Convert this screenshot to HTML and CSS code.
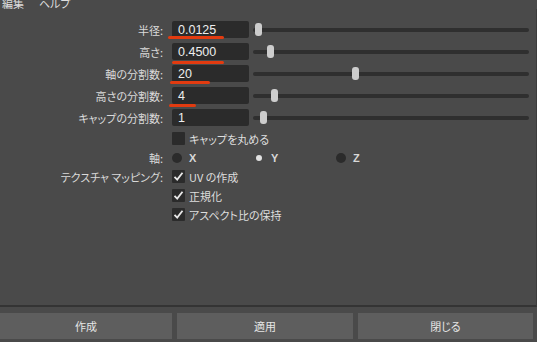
FILE: index.html
```html
<!DOCTYPE html>
<html lang="ja">
<head>
<meta charset="utf-8">
<link rel="stylesheet" href="styles.css">
</head>
<body>
<div class="menubar"><span class="menu">編集</span><span class="menu">ヘルプ</span></div>
<div class="panel">
  <div class="fields">
    <div class="frow">
      <span class="label">半径:</span>
      <div class="field">0.0125<span class="mark m1"></span></div>
      <div class="slider"><div class="track"></div><div class="thumb" style="left:2px"></div></div>
    </div>
    <div class="frow">
      <span class="label">高さ:</span>
      <div class="field">0.4500<span class="mark m2"></span></div>
      <div class="slider"><div class="track"></div><div class="thumb" style="left:14px"></div></div>
    </div>
    <div class="frow">
      <span class="label">軸の分割数:</span>
      <div class="field">20<span class="mark m3"></span></div>
      <div class="slider"><div class="track"></div><div class="thumb" style="left:99px"></div></div>
    </div>
    <div class="frow">
      <span class="label">高さの分割数:</span>
      <div class="field">4<span class="mark m4"></span></div>
      <div class="slider"><div class="track"></div><div class="thumb" style="left:18px"></div></div>
    </div>
    <div class="frow">
      <span class="label">キャップの分割数:</span>
      <div class="field">1</div>
      <div class="slider"><div class="track"></div><div class="thumb" style="left:7px"></div></div>
    </div>
  </div>
  <div class="opts">
    <div class="orow">
      <span class="label"></span>
      <span class="cb"></span><span class="otext">キャップを丸める</span>
    </div>
    <div class="orow">
      <span class="label">軸:</span>
      <div class="radios">
        <span class="radio"><span class="rb"></span><span class="rtext">X</span></span>
        <span class="radio"><span class="rb on"></span><span class="rtext">Y</span></span>
        <span class="radio"><span class="rb"></span><span class="rtext">Z</span></span>
      </div>
    </div>
    <div class="orow">
      <span class="label">テクスチャ マッピング:</span>
      <span class="cb"><svg viewBox="0 0 13 13" width="13" height="13"><polyline points="2.5,6.8 5.2,9.6 10.5,2.8" fill="none" stroke="#e8e8e8" stroke-width="1.8"/></svg></span><span class="otext">UV の作成</span>
    </div>
    <div class="orow">
      <span class="label"></span>
      <span class="cb"><svg viewBox="0 0 13 13" width="13" height="13"><polyline points="2.5,6.8 5.2,9.6 10.5,2.8" fill="none" stroke="#e8e8e8" stroke-width="1.8"/></svg></span><span class="otext">正規化</span>
    </div>
    <div class="orow">
      <span class="label"></span>
      <span class="cb"><svg viewBox="0 0 13 13" width="13" height="13"><polyline points="2.5,6.8 5.2,9.6 10.5,2.8" fill="none" stroke="#e8e8e8" stroke-width="1.8"/></svg></span><span class="otext">アスペクト比の保持</span>
    </div>
  </div>
</div>
<div class="buttons">
  <div class="btn">作成</div>
  <div class="btn">適用</div>
  <div class="btn">閉じる</div>
</div>
</body>
</html>
```

FILE: styles.css
```css
html, body {
  margin: 0;
  padding: 0;
}
body {
  width: 537px;
  height: 342px;
  overflow: hidden;
  background: #4a4a4a;
  color: #dcdcdc;
  font-family: "Noto Sans CJK JP", "Liberation Sans", sans-serif;
  font-size: 11px;
  font-feature-settings: "palt";
}
.menubar {
  height: 9px;
  overflow: hidden;
  display: flex;
  align-items: flex-end;
  padding-left: 2px;
  gap: 15px;
}
.menu {
  line-height: 11px;
  color: #dedede;
}
.panel {
  height: 284px;
  padding-top: 12px;
  border-bottom: 2px solid #343434;
  border-right: 1px solid #3c3c3c;
  width: 536px;
}
.frow {
  display: flex;
  align-items: center;
  height: 17px;
  margin-bottom: 5px;
}
.label {
  width: 163px;
  flex: none;
  text-align: right;
  white-space: nowrap;
  color: #dadada;
}
.field {
  position: relative;
  flex: none;
  width: 71px;
  height: 17px;
  margin-left: 9px;
  padding-left: 6px;
  background: #2b2b2b;
  border-radius: 2px;
  font-family: "Liberation Sans", sans-serif;
  font-size: 12.5px;
  line-height: 18px;
  color: #eeeeee;
}
.mark {
  position: absolute;
  height: 3px;
  border-radius: 2px;
  background: #e23b10;
}
.m1 { left: -4px; width: 56px; top: 15px; }
.m2 { left: 0; width: 52px; top: 18px; }
.m3 { left: -2px; width: 40px; top: 16px; }
.m4 { left: -3px; width: 27px; top: 17px; }
.slider {
  position: relative;
  flex: none;
  width: 276px;
  height: 17px;
  margin-left: 4px;
}
.track {
  position: absolute;
  left: 0;
  right: 0;
  top: 7px;
  height: 4px;
  border-radius: 2px;
  background: #2f2f2f;
}
.thumb {
  position: absolute;
  top: 2px;
  width: 7px;
  height: 13px;
  border-radius: 3px;
  background: #cdcdcd;
}
.opts {
  margin-top: -2px;
}
.orow {
  display: flex;
  align-items: center;
  height: 19px;
}
.cb {
  flex: none;
  width: 13px;
  height: 13px;
  margin-left: 9px;
  background: #2b2b2b;
  border-radius: 1px;
  display: flex;
}
.otext {
  margin-left: 4px;
  color: #dedede;
}
.radios {
  display: flex;
  align-items: center;
  margin-left: 9px;
}
.radio {
  display: flex;
  align-items: center;
  width: 82px;
  flex: none;
}
.rb {
  width: 10px;
  height: 10px;
  border-radius: 50%;
  background: #2b2b2b;
  flex: none;
  display: flex;
  align-items: center;
  justify-content: center;
}
.rb.on {
  background: transparent;
}
.rb.on::after {
  content: "";
  width: 6px;
  height: 6px;
  border-radius: 50%;
  background: #e2e2e2;
}
.rtext {
  margin-left: 7px;
  font-family: "Liberation Sans", sans-serif;
  font-weight: bold;
  font-size: 11px;
  color: #d8d8d8;
}
.buttons {
  display: grid;
  grid-template-columns: 172px 176px 175px;
  column-gap: 5px;
  padding-top: 6px;
}
.btn {
  height: 26px;
  background: #5e5e5e;
  color: #e6e6e6;
  display: flex;
  align-items: center;
  justify-content: center;
  font-size: 11px;
}
```
